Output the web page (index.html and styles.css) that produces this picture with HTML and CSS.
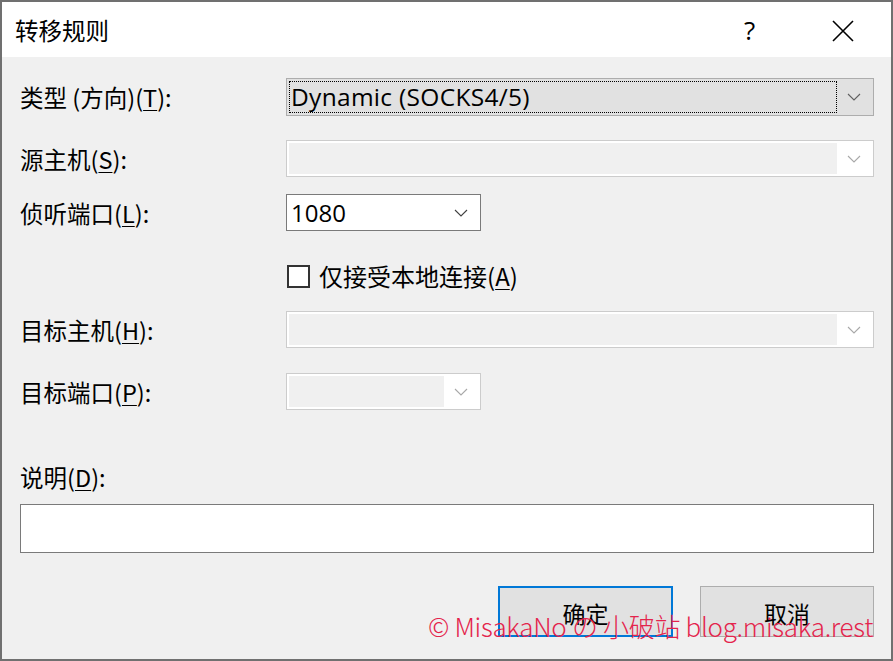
FILE: index.html
```html
<!DOCTYPE html>
<html lang="zh-CN">
<head>
<meta charset="utf-8">
<link rel="stylesheet" href="styles.css">
</head>
<body>
<div class="window">
  <div class="titlebar">
    <span class="title">转移规则</span>
    <span class="help">?</span>
    <span class="close">
      <svg width="22" height="22" viewBox="0 0 22 22"><path d="M1 1 L21 21 M21 1 L1 21" stroke="#000" stroke-width="1.6" fill="none"/></svg>
    </span>
  </div>
  <div class="body">
    <div class="row r1">
      <label class="lbl">类型 (方向)(<u>T</u>):</label>
      <div class="combo combo-focus wide">
        <div class="focus-rect"><span class="val latin val-wide">Dynamic (SOCKS4/5)</span></div>
        <svg class="arrow" width="14" height="8" viewBox="0 0 14 8"><path d="M1 1 L7 7 L13 1" stroke="#606060" stroke-width="1.1" fill="none"/></svg>
      </div>
    </div>
    <div class="row r2">
      <label class="lbl">源主机(<u>S</u>):</label>
      <div class="combo combo-dis wide">
        <div class="dis-inner"></div>
        <svg class="arrow" width="14" height="8" viewBox="0 0 14 8"><path d="M1 1 L7 7 L13 1" stroke="#a8a8a8" stroke-width="1.1" fill="none"/></svg>
      </div>
    </div>
    <div class="row r3">
      <label class="lbl">侦听端口(<u>L</u>):</label>
      <div class="combo combo-edit narrow">
        <span class="val latin">1080</span>
        <svg class="arrow" width="14" height="8" viewBox="0 0 14 8"><path d="M1 1 L7 7 L13 1" stroke="#404040" stroke-width="1.1" fill="none"/></svg>
      </div>
    </div>
    <div class="row r4">
      <span></span>
      <div class="check">
        <span class="box"></span>
        <span class="check-lbl">仅接受本地连接(<u>A</u>)</span>
      </div>
    </div>
    <div class="row r5">
      <label class="lbl">目标主机(<u>H</u>):</label>
      <div class="combo combo-dis wide">
        <div class="dis-inner"></div>
        <svg class="arrow" width="14" height="8" viewBox="0 0 14 8"><path d="M1 1 L7 7 L13 1" stroke="#a8a8a8" stroke-width="1.1" fill="none"/></svg>
      </div>
    </div>
    <div class="row r6">
      <label class="lbl">目标端口(<u>P</u>):</label>
      <div class="combo combo-dis narrow">
        <div class="dis-inner"></div>
        <svg class="arrow" width="14" height="8" viewBox="0 0 14 8"><path d="M1 1 L7 7 L13 1" stroke="#a8a8a8" stroke-width="1.1" fill="none"/></svg>
      </div>
    </div>
    <label class="lbl desc-lbl">说明(<u>D</u>):</label>
    <div class="textbox"></div>
    <div class="buttons">
      <div class="btn btn-default">确定</div>
      <div class="btn">取消</div>
    </div>
  </div>
  <div class="watermark">© MisakaNo の 小破站 blog.misaka.rest</div>
</div>
</body>
</html>
```
FILE: styles.css
```css
html, body {
  margin: 0;
  padding: 0;
  background: #6f6f6f;
}
body {
  font-family: "Noto Sans CJK SC", "Noto Sans", sans-serif;
  color: #000;
}
.window {
  position: relative;
  box-sizing: border-box;
  width: 893px;
  height: 661px;
  border: 2px solid #707070;
  background: #f0f0f0;
  display: flex;
  flex-direction: column;
}
.titlebar {
  height: 55px;
  background: #fff;
  display: flex;
  align-items: center;
  padding-left: 13px;
  flex: none;
}
.title {
  font-size: 23.5px;
  flex: 1;
  line-height: 1;
  margin-top: 2px;
}
.help {
  font-family: "Open Sans", "Noto Sans", sans-serif;
  font-size: 26px;
  width: 32px;
  margin-right: 56px;
  text-align: left;
  line-height: 1;
}
.close {
  width: 22px;
  margin-right: 37px;
  display: flex;
  margin-top: 2px;
}
.body {
  padding: 0 17px 0 18px;
  display: flex;
  flex-direction: column;
}
.row {
  display: grid;
  grid-template-columns: 266px 1fr;
  align-items: center;
  height: 37px;
}
.r1 { margin-top: 21px; height: 38px; }
.r2 { margin-top: 24px; }
.r3 { margin-top: 17px; }
.r4 { margin-top: 30px; height: 23px; }
.r5 { margin-top: 27px; }
.r6 { margin-top: 25px; }
.lbl {
  font-size: 23.5px;
  line-height: 30px;
  white-space: nowrap;
}
.lbl u, .check-lbl u {
  text-underline-offset: 3px;
  text-decoration-thickness: 1px;
}
.latin {
  font-family: "Open Sans", "Noto Sans", sans-serif;
}
.combo {
  box-sizing: border-box;
  height: 100%;
  position: relative;
  display: flex;
  align-items: center;
}
.wide { width: 588px; }
.narrow { width: 195px; }
.combo .arrow {
  position: absolute;
  right: 12px;
  top: 50%;
  margin-top: -4px;
}
.combo-focus {
  background: #e1e1e1;
  border: 1px solid #adadad;
  padding: 2px;
}
.focus-rect {
  box-sizing: border-box;
  width: 548px;
  height: 100%;
  border: 1px dotted #000;
  display: flex;
  align-items: center;
  padding-left: 1px;
}
.val {
  font-size: 24px;
  line-height: 1;
}
.val-wide {
  font-size: 24.5px;
  letter-spacing: 0.3px;
}
.combo-dis {
  background: #fff;
  border: 1px solid #cccccc;
  padding: 2px;
}
.dis-inner {
  height: 100%;
  flex: 1;
  background: #f0f0f0;
  margin-right: 34px;
}
.combo-edit {
  background: #fff;
  border: 1px solid #7a7a7a;
  padding-left: 4px;
}
.check {
  display: flex;
  align-items: center;
  gap: 9px;
  padding-left: 1px;
}
.box {
  box-sizing: border-box;
  width: 23px;
  height: 23px;
  border: 2px solid #333;
  background: #fff;
  flex: none;
}
.check-lbl {
  font-size: 24px;
  line-height: 30px;
  white-space: nowrap;
}
.desc-lbl {
  margin-top: 52px;
}
.textbox {
  box-sizing: border-box;
  margin-top: 12px;
  height: 49px;
  background: #fff;
  border: 1px solid #7a7a7a;
}
.buttons {
  margin-top: 33px;
  display: flex;
  justify-content: flex-end;
  gap: 27px;
}
.btn {
  box-sizing: border-box;
  width: 174px;
  height: 51px;
  background: #e1e1e1;
  border: 1px solid #adadad;
  font-size: 23px;
  display: flex;
  align-items: center;
  justify-content: center;
  padding-top: 2px;
}
.btn-default {
  width: 175px;
  border: 2px solid #0078d7;
}
.watermark {
  position: absolute;
  right: 18px;
  bottom: 20px;
  color: #e4244c;
  font-size: 26px;
  font-weight: 300;
  line-height: 1;
  white-space: nowrap;
  letter-spacing: -0.3px;
}
```
